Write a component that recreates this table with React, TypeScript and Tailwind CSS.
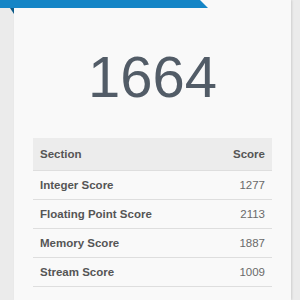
import React from 'react';

const rows = [
  { name: 'Integer Score', score: 1277 },
  { name: 'Floating Point Score', score: 2113 },
  { name: 'Memory Score', score: 1887 },
  { name: 'Stream Score', score: 1009 },
];

export default function App() {
  return (
    <div className="relative h-[300px] w-[300px] overflow-hidden bg-[#ebebeb] font-['Liberation_Sans',Arial,sans-serif]">
      {/* card */}
      <div className="ml-[14px] h-full w-[277px] bg-[#f9f9f9] shadow-[1px_0_2px_rgba(0,0,0,0.12)]">
        <div className="flex h-[138px] items-start justify-center pt-[44px]">
          <span className="text-[58px] leading-[66px] text-[#525c67]">1664</span>
        </div>
        <div className="mx-[19px]">
          <div className="flex h-[33px] items-center justify-between border-b border-[#dedede] bg-[#ececec] px-[7px] pt-[1px] text-[11.5px] font-bold text-[#555]">
            <span>Section</span>
            <span>Score</span>
          </div>
          {rows.map((r) => (
            <div
              key={r.name}
              className="flex h-[29px] items-center justify-between border-b border-[#dedede] px-[7px] pt-[1px] text-[11.5px]"
            >
              <span className="font-bold text-[#555]">{r.name}</span>
              <span className="text-[#6a6a6a]">{r.score}</span>
            </div>
          ))}
        </div>
      </div>

      {/* ribbon */}
      <div className="absolute left-0 top-0 h-[8px] w-[208px] bg-[#1585c6] [clip-path:polygon(0_0,200px_0,208px_8px,0_8px)]" />
      <div className="absolute left-[10px] top-[8px] h-[6px] w-[4px] bg-[#0c5a88] [clip-path:polygon(0_0,100%_0,100%_100%)]" />
    </div>
  );
}
